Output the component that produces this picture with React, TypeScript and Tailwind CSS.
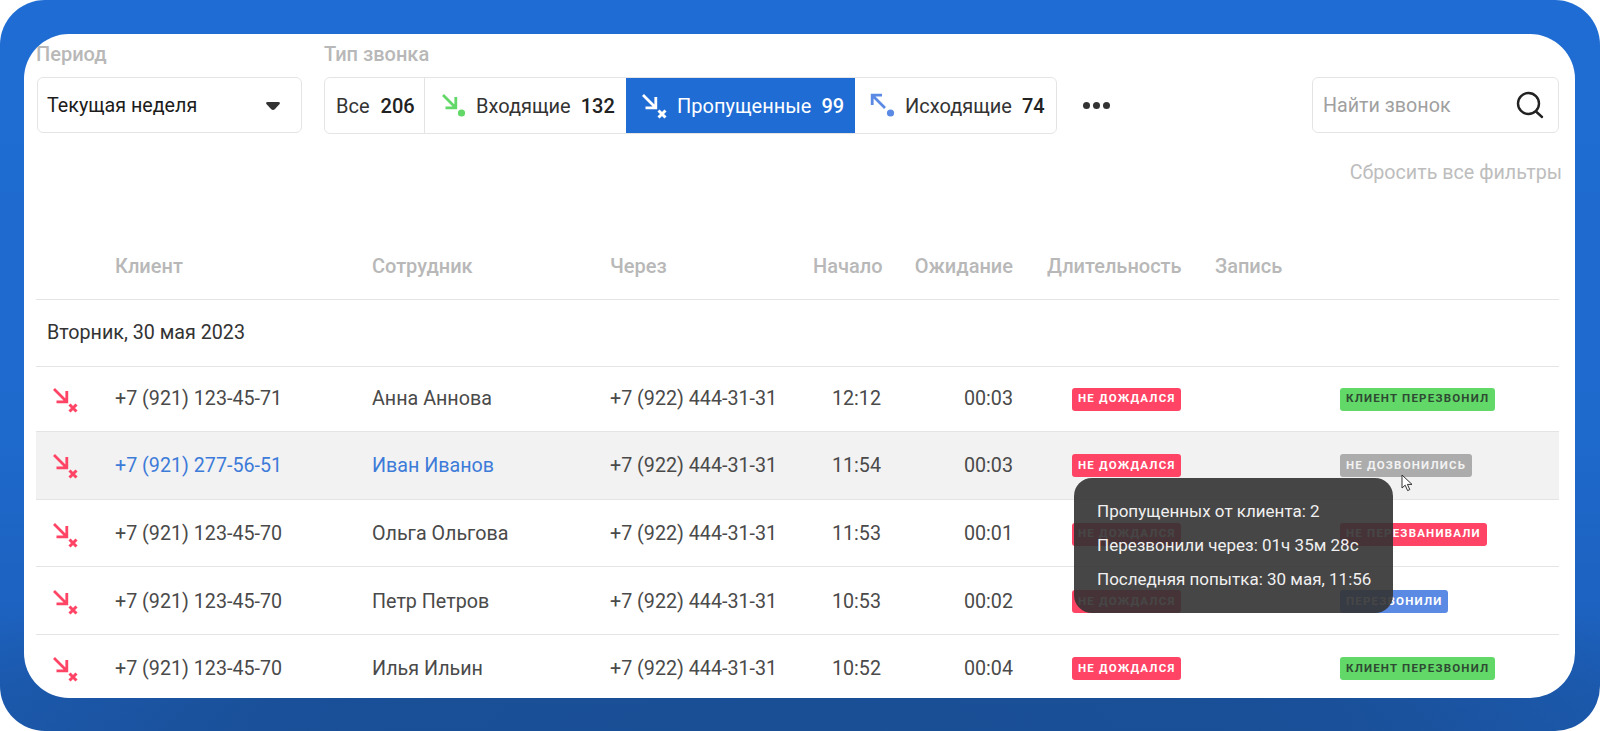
import React from "react";

const RED = "#ff4465";
const GRID = "grid grid-cols-[79px_257px_238px_203px_68px_132px_202px_125px_219px] items-center";

function CallIcon({ color, end, dir = "in", className = "" }: { color: string; end: "dot" | "x"; dir?: "in" | "out"; className?: string }) {
  return (
    <svg width="28" height="28" viewBox="0 0 28 28" fill="none" className={className}>
      {dir === "in" ? (
        <path d="M3 3 L15.5 15.5 M15.8 5 V15.8 H5.5" stroke={color} strokeWidth="2.8" />
      ) : (
        <path d="M16 16 L3.5 3.5 M3.2 13 V3.2 H13" stroke={color} strokeWidth="2.8" />
      )}
      {end === "dot" ? (
        <circle cx="21.5" cy="21" r="3.6" fill={color} />
      ) : (
        <path d="M18.5 18.5 L25.5 25.5 M25.5 18.5 L18.5 25.5" stroke={color} strokeWidth="3" />
      )}
    </svg>
  );
}

function Badge({ text, tone }: { text: string; tone: "red" | "green" | "gray" | "blue" }) {
  const tones = {
    red: "bg-[#ff4465] text-[#fff]",
    green: "bg-[#62d868] text-[#2f4a33]",
    gray: "bg-[#acacac] text-[#f2f2f2]",
    blue: "bg-[#5b8ae4] text-[#fff]",
  };
  return (
    <span className={`inline-flex h-[23px] items-center justify-self-start rounded-[3px] px-[6px] text-[11.5px] font-bold tracking-[1.2px] whitespace-nowrap ${tones[tone]}`}>
      {text}
    </span>
  );
}

const rows = [
  { h: "h-[65px]", phone: "+7 (921) 123-45-71", name: "Анна Аннова", start: "12:12", wait: "00:03", status: "КЛИЕНТ ПЕРЕЗВОНИЛ", tone: "green" as const },
  { h: "h-[68px]", phone: "+7 (921) 277-56-51", name: "Иван Иванов", start: "11:54", wait: "00:03", status: "НЕ ДОЗВОНИЛИСЬ", tone: "gray" as const, active: true },
  { h: "h-[67px] pt-[2px]", phone: "+7 (921) 123-45-70", name: "Ольга Ольгова", start: "11:53", wait: "00:01", status: "НЕ ПЕРЕЗВАНИВАЛИ", tone: "red" as const },
  { h: "h-[68px] pt-[2px]", phone: "+7 (921) 123-45-70", name: "Петр Петров", start: "10:53", wait: "00:02", status: "ПЕРЕЗВОНИЛИ", tone: "blue" as const },
  { h: "h-[65px] pt-[2px]", phone: "+7 (921) 123-45-70", name: "Илья Ильин", start: "10:52", wait: "00:04", status: "КЛИЕНТ ПЕРЕЗВОНИЛ", tone: "green" as const, last: true },
];

export default function App() {
  return (
    <div className="h-[731px] w-[1600px] overflow-hidden bg-white font-['Roboto',sans-serif]">
      <div className="h-[731px] w-[1600px] rounded-[45px] bg-[radial-gradient(ellipse_62%_26%_at_50%_100%,#1a4f95_0%,#1a5099_55%,rgba(31,108,212,0)_100%),linear-gradient(180deg,#1f6dd4_0%,#1e69cc_60%,#1c5db6_100%)] pt-[34px] pl-[24px]">
        <div className="relative h-[664px] w-[1551px] overflow-hidden rounded-[45px] bg-white pl-[12px] pr-[16px]">
          {/* Filters */}
          <div className="flex pt-[9px]">
            <div className="w-[288px]">
              <div className="text-[20px] leading-[22px] font-medium text-[#b8b8b8]">Период</div>
              <div className="mt-[12px] ml-[1px] flex h-[56px] w-[265px] items-center justify-between rounded-[6px] border border-[#e4e4e4] pt-[2px] pr-[20px] pl-[9px] text-[19.7px] text-[#1c1c1c]">
                <span>Текущая неделя</span>
                <svg width="16" height="10" viewBox="0 0 16 10">
                  <path d="M2.5 1 H13.5 Q15.5 1 14.6 3 L10 8 Q8 9.8 6 8 L1.4 3 Q0.5 1 2.5 1 Z" fill="#333" />
                </svg>
              </div>
            </div>
            <div className="w-[988px]">
              <div className="text-[20px] leading-[22px] font-medium text-[#b8b8b8]">Тип звонка</div>
              <div className="mt-[12px] flex items-center">
                <div className="flex h-[57px] w-[733px] overflow-hidden rounded-[6px] border border-[#e4e4e4] text-[20px] text-[#333]">
                  <div className="flex w-[100px] items-center border-r border-[#e4e4e4] pt-[1px] pl-[11px]">
                    <span>Все</span>
                    <span className="ml-[11px] font-medium text-[#222]">206</span>
                  </div>
                  <div className="flex w-[201px] items-center pl-[15px]">
                    <CallIcon color="#62d868" end="dot" className="mt-[1px]" />
                    <span className="ml-[8px] pt-[1px]">Входящие</span>
                    <span className="ml-[10px] pt-[1px] font-medium text-[#222]">132</span>
                  </div>
                  <div className="flex w-[229px] items-center bg-[#1e6cd4] pl-[14px] text-white">
                    <CallIcon color="#ffffff" end="x" className="mt-[1px]" />
                    <span className="ml-[9px] pt-[1px]">Пропущенные</span>
                    <span className="ml-[10px] pt-[1px] font-medium">99</span>
                  </div>
                  <div className="flex flex-1 items-center pl-[14px]">
                    <CallIcon color="#5b8ae4" end="dot" dir="out" className="mt-[1px]" />
                    <span className="ml-[8px] pt-[1px]">Исходящие</span>
                    <span className="ml-[10px] pt-[1px] font-medium text-[#222]">74</span>
                  </div>
                </div>
                <div className="ml-[26px] flex gap-[3px]">
                  <span className="h-[7px] w-[7px] rounded-full bg-[#333]" />
                  <span className="h-[7px] w-[7px] rounded-full bg-[#333]" />
                  <span className="h-[7px] w-[7px] rounded-full bg-[#333]" />
                </div>
              </div>
            </div>
            <div className="mt-[34px] flex h-[56px] w-[247px] items-center justify-between rounded-[6px] border border-[#e4e4e4] pr-[14px] pl-[10px] text-[19.7px] text-[#a0a0a0]">
              <span className="pt-[2px]">Найти звонок</span>
              <svg width="28" height="28" viewBox="0 0 28 28" fill="none">
                <circle cx="12.5" cy="12.5" r="10.5" stroke="#222" strokeWidth="2.4" />
                <path d="M20 20.5 L26 26" stroke="#222" strokeWidth="2.4" strokeLinecap="round" />
              </svg>
            </div>
          </div>
          <div className="mt-[27px] mr-[-3px] text-right text-[19.7px] leading-[24px] text-[#bdbdbd]">Сбросить все фильтры</div>

          {/* Table header */}
          <div className={`${GRID} mt-[47px] h-[68px] border-b border-[#e4e4e4] text-[20px] font-medium text-[#b8b8b8]`}>
            <span />
            <span>Клиент</span>
            <span>Сотрудник</span>
            <span>Через</span>
            <span>Начало</span>
            <span className="text-right">Ожидание</span>
            <span className="ml-[34px] whitespace-nowrap">Длительность</span>
            <span>Запись</span>
            <span />
          </div>
          <div className="flex h-[67px] items-center border-b border-[#e4e4e4] pl-[11px] text-[19.7px] text-[#333]">Вторник, 30 мая 2023</div>

          {/* Rows */}
          {rows.map((r) => (
            <div
              key={r.phone + r.start}
              className={`${GRID} ${r.h} ${r.last ? "" : "border-b border-[#e4e4e4]"} ${r.active ? "bg-[#f2f2f2]" : ""} text-[19.7px] text-[#4a4a4a]`}
            >
              <CallIcon color={RED} end="x" className="mt-[1px] ml-[15px]" />
              <span className={r.active ? "text-[#3d7bd9]" : ""}>{r.phone}</span>
              <span className={r.active ? "text-[#3d7bd9]" : ""}>{r.name}</span>
              <span>+7 (922) 444-31-31</span>
              <span className="text-right">{r.start}</span>
              <span className="text-right">{r.wait}</span>
              <span className="ml-[59px] flex">
                <Badge text="НЕ ДОЖДАЛСЯ" tone="red" />
              </span>
              <span />
              <Badge text={r.status} tone={r.tone} />
            </div>
          ))}

          {/* Tooltip over the table */}
          <div className="absolute top-[444px] left-[1050px] flex h-[135px] w-[319px] flex-col justify-center gap-[11px] rounded-[18px] bg-[rgba(50,50,50,0.9)] pl-[23px] text-[17px] leading-[23px] text-[#f0f0f0]">
            <div>Пропущенных от клиента: 2</div>
            <div>Перезвонили через: 01ч 35м 28с</div>
            <div>Последняя попытка: 30 мая, 11:56</div>
          </div>

          {/* Pointer */}
          <svg className="absolute top-[440px] left-[1377px]" width="13" height="18" viewBox="0 0 13 18">
            <path d="M1 1 V14 L4.2 11.2 L6.6 16.6 L8.8 15.6 L6.4 10.4 H11 Z" fill="#fff" stroke="#333" strokeWidth="1" />
          </svg>
        </div>
      </div>
    </div>
  );
}
